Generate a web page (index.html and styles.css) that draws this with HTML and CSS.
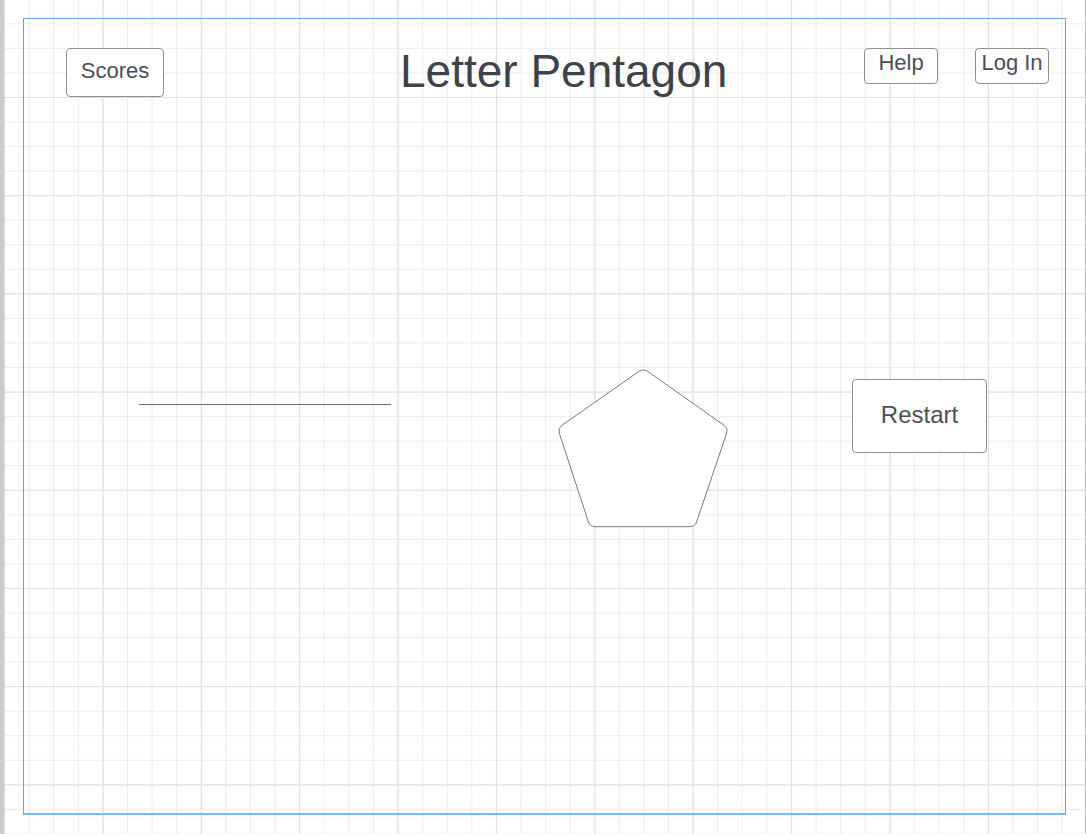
FILE: index.html
```html
<!DOCTYPE html>
<html lang="en">
<head>
<meta charset="utf-8">
<title>Letter Pentagon</title>
<link rel="stylesheet" href="styles.css">
</head>
<body>
<div class="page">
  <div class="frame">
    <header class="header">
      <button class="btn btn-scores">Scores</button>
      <h1 class="title">Letter Pentagon</h1>
      <button class="btn btn-small btn-help">Help</button>
      <button class="btn btn-small btn-login">Log In</button>
    </header>
    <main class="board">
      <div class="answer-line"></div>
      <svg class="pentagon" width="176" height="164" viewBox="0 0 176 164">
        <path d="M84.2 5.2 Q88.3 2.3 92.4 5.2 L169.2 59.4 Q173.3 62.3 171.7 67 L141.6 156 Q140 160.7 135 160.7 L40 160.7 Q35 160.7 33.4 156 L4.3 67.1 Q2.7 62.3 6.8 59.4 Z" fill="#ffffff" stroke="#7a7a7a" stroke-width="1"/>
      </svg>
      <button class="btn btn-restart">Restart</button>
    </main>
  </div>
</div>
</body>
</html>
```
FILE: styles.css
```css
html, body {
  margin: 0;
  padding: 0;
}

body {
  font-family: "Liberation Sans", Arial, sans-serif;
  background: #ffffff;
}

.page {
  box-sizing: border-box;
  width: 1086px;
  height: 834px;
  border-left: 4px solid #c9cdd2;
  border-right: 1px solid #c4c4c4;
  padding: 18px 19px 19px 19px;
  background-color: #ffffff;
  background-image:
    linear-gradient(to right, #dfdfdf 1px, transparent 1px),
    linear-gradient(to bottom, #dfdfdf 1px, transparent 1px),
    linear-gradient(to right, #ececec 1px, transparent 1px),
    linear-gradient(to bottom, #ececec 1px, transparent 1px);
  background-size: 98.4px 98.2px, 98.4px 98.2px, 24.6px 24.55px, 24.6px 24.55px;
  background-position: 0 -1.2px, 0 -1.2px, 0 -1.2px, 0 -1.2px;
}

.frame {
  box-sizing: border-box;
  height: 100%;
  border: 1px solid #55a6f3;
  border-bottom: 2px solid #78b9f5;
  display: flex;
  flex-direction: column;
}

.header {
  display: flex;
  align-items: flex-start;
  padding: 29px 16px 0 42px;
}

.btn {
  box-sizing: border-box;
  display: flex;
  align-items: center;
  justify-content: center;
  margin: 0;
  padding: 0;
  background: #ffffff;
  border: 1px solid #8c8f93;
  border-radius: 4px;
  font-family: "Liberation Sans", Arial, sans-serif;
  color: #4b5057;
  cursor: pointer;
}

.btn-scores {
  width: 98px;
  height: 49px;
  font-size: 22px;
  padding-bottom: 4px;
}

.title {
  margin: 0 0 0 236px;
  font-size: 46px;
  line-height: 46px;
  font-weight: normal;
  color: #3e434a;
  white-space: nowrap;
}

.btn-small {
  width: 74px;
  height: 36px;
  font-size: 22px;
  padding-bottom: 7px;
}

.btn-help {
  margin-left: auto;
}

.btn-login {
  margin-left: 37px;
}

.board {
  display: flex;
  align-items: flex-start;
  margin-top: 269px;
  padding-left: 115px;
}

.answer-line {
  width: 252px;
  height: 1px;
  margin-top: 38px;
  background: #6e6e6e;
}

.pentagon {
  display: block;
  margin-left: 164px;
}

.btn-restart {
  width: 135px;
  height: 74px;
  margin-left: 121px;
  margin-top: 13px;
  font-size: 24px;
  padding-bottom: 2px;
}
```
